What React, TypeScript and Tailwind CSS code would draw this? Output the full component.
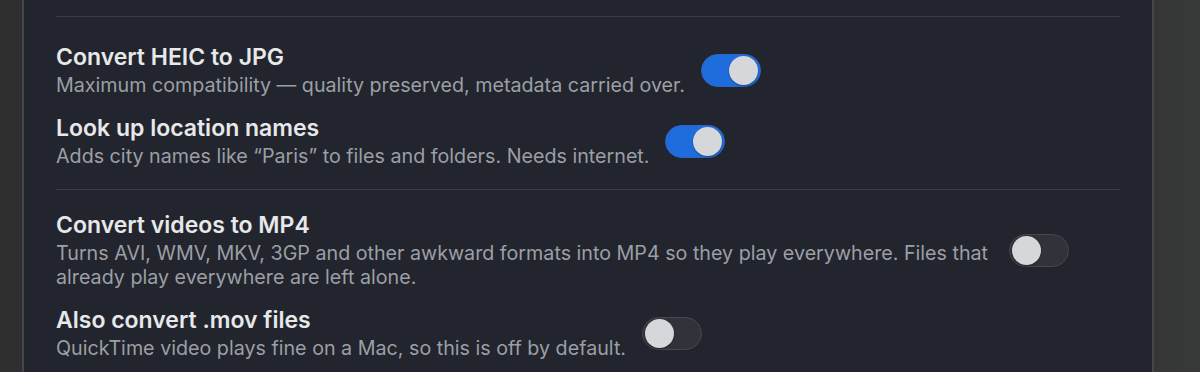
import React from 'react';

type Row = {
  title: string;
  desc: string;
  on: boolean;
};

const Toggle = ({ on }: { on: boolean }) => (
  <div
    className={
      on
        ? 'flex h-[33px] w-[60px] shrink-0 items-center justify-end rounded-full border border-[#2a66c4] bg-[#1f6ddd] px-[2px]'
        : 'flex h-[33px] w-[60px] shrink-0 items-center justify-start rounded-full border border-[#45484f] bg-[#30333a] px-[2px]'
    }
  >
    <div className="h-[29px] w-[29px] rounded-full bg-[#d6d7da] shadow-[0_1px_2px_rgba(0,0,0,0.35)]" />
  </div>
);

const SettingRow = ({ row }: { row: Row }) => (
  <div className="flex items-center gap-[16px]">
    <div className="max-w-[937px]">
      <div className="text-[23px] leading-[28px] font-semibold text-[#e7e8ea]">{row.title}</div>
      <div className="text-[19.7px] leading-[24px] text-[#9c9fa5] mt-[2px]">{row.desc}</div>
    </div>
    <Toggle on={row.on} />
  </div>
);

const App = () => {
  const photos: Row[] = [
    {
      title: 'Convert HEIC to JPG',
      desc: 'Maximum compatibility — quality preserved, metadata carried over.',
      on: true,
    },
    {
      title: 'Look up location names',
      desc: 'Adds city names like “Paris” to files and folders. Needs internet.',
      on: true,
    },
  ];

  const videos: Row[] = [
    {
      title: 'Convert videos to MP4',
      desc: 'Turns AVI, WMV, MKV, 3GP and other awkward formats into MP4 so they play everywhere. Files that already play everywhere are left alone.',
      on: false,
    },
    {
      title: 'Also convert .mov files',
      desc: 'QuickTime video plays fine on a Mac, so this is off by default.',
      on: false,
    },
  ];

  return (
    <div
      className="flex h-[372px] w-[1200px] overflow-hidden bg-[#2e2e2e]"
      style={{ fontFamily: 'Inter, "Noto Sans", sans-serif' }}
    >
      <div className="w-[22px] shrink-0 bg-[#2f2f30]" />
      <div className="flex-1 border-x-2 border-[#45474b] bg-[#22252d] px-[32px] pt-[16px]">
        <div className="h-px bg-[#3a3d45]" />
        <div className="flex flex-col gap-[17px] pt-[26px] pb-[21px]">
          {photos.map((row, i) => (
            <SettingRow key={i} row={row} />
          ))}
        </div>
        <div className="h-px bg-[#3a3d45]" />
        <div className="flex flex-col gap-[17px] pt-[21px]">
          {videos.map((row, i) => (
            <SettingRow key={i} row={row} />
          ))}
        </div>
      </div>
      <div className="w-[46px] shrink-0 bg-gradient-to-r from-[#363636] to-[#363a37]" />
    </div>
  );
};

export default App;
